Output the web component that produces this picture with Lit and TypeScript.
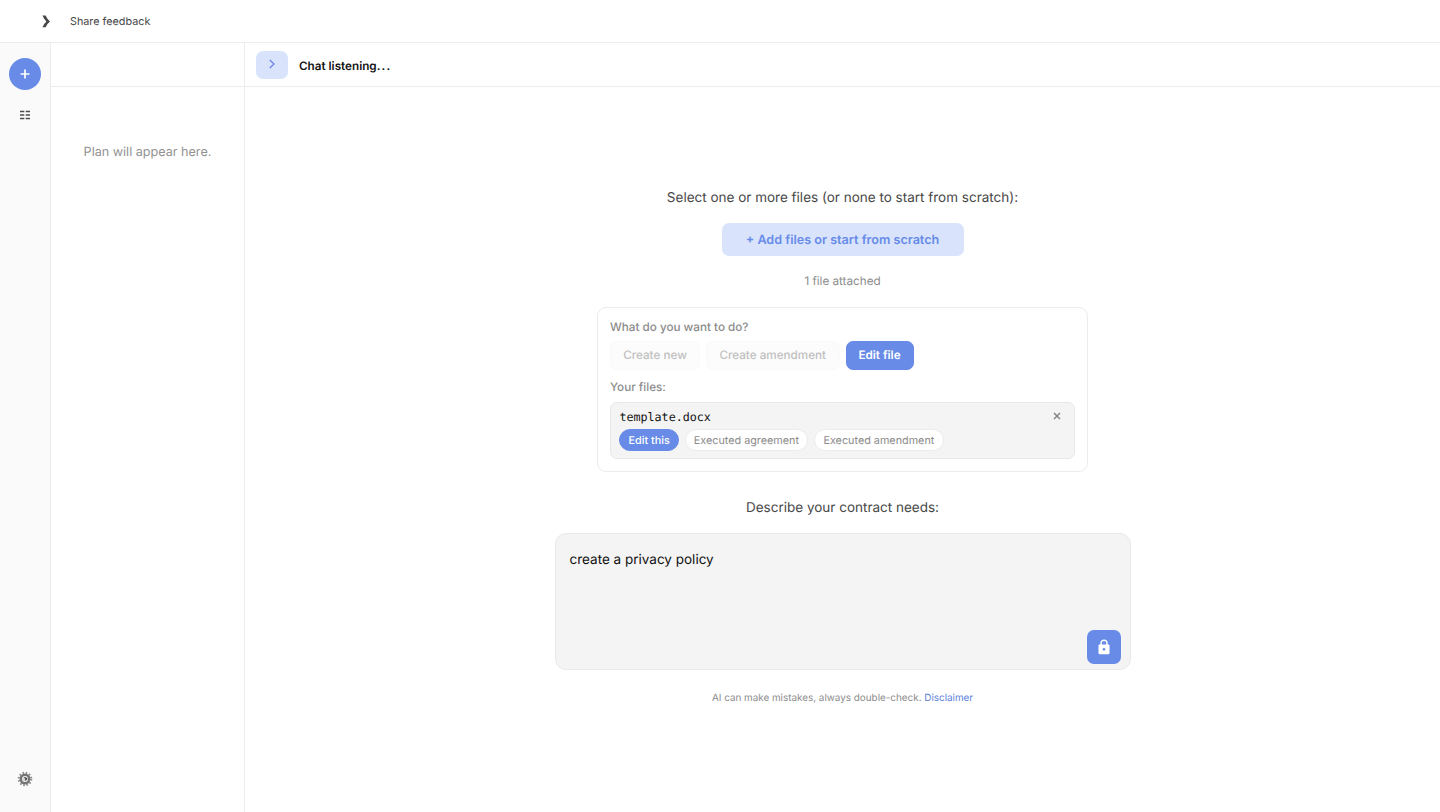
import { LitElement, html, css } from "lit";
import { customElement } from "lit/decorators.js";

@customElement("app-root")
export class AppRoot extends LitElement {
  static styles = css`
    :host {
      display: flex;
      flex-direction: column;
      height: 100vh;
      background: #fff;
      color: #111;
      font-family: Inter, "Liberation Sans", sans-serif;
      text-rendering: geometricPrecision;
      white-space: nowrap;
      overflow: hidden;
    }
    * { box-sizing: border-box; }
    svg { display: block; }
    .top {
      height: 43px;
      flex: none;
      display: flex;
      align-items: center;
      border-bottom: 1px solid #ececec;
      padding-left: 42px;
    }
    .top svg { margin-right: 20px; }
    .share { font-size: 10.8px; line-height: 16px; color: #484848; padding-top: 2px; }
    .body { flex: 1; display: flex; min-height: 0; }
    .rail {
      width: 51px;
      flex: none;
      background: #fafafa;
      border-right: 1px solid #ececec;
      display: flex;
      flex-direction: column;
      align-items: center;
      padding: 15px 0 25px;
    }
    .add {
      width: 32px;
      height: 32px;
      border-radius: 50%;
      background: #678be7;
      display: grid;
      place-items: center;
    }
    .list { margin-top: 20px; }
    .gear { margin-top: auto; }
    .plan { width: 194px; flex: none; border-right: 1px solid #ececec; }
    .planhead { height: 44px; border-bottom: 1px solid #ececec; }
    .planempty {
      margin-top: 56px;
      text-align: center;
      font-size: 12.6px;
      line-height: 20px;
      color: #929292;
    }
    .chat { flex: 1; display: flex; flex-direction: column; }
    .chathead {
      height: 44px;
      flex: none;
      border-bottom: 1px solid #ececec;
      display: flex;
      align-items: flex-start;
      padding: 8px 0 0 10.6px;
    }
    .toggle {
      width: 32.4px;
      height: 28px;
      border-radius: 7px;
      background: #d9e4fc;
      display: grid;
      place-items: center;
      padding-bottom: 2px;
    }
    .listening {
      margin: 5px 0 0 11px;
      font-size: 11.7px;
      font-weight: 560;
      line-height: 20px;
      color: #111;
    }
    .dots { letter-spacing: 1.2px; }
    .main {
      flex: 1;
      display: flex;
      flex-direction: column;
      align-items: center;
      padding-top: 100px;
    }
    .label { font-size: 13.5px; height: 20px; line-height: 22px; color: #484848; }
    .addfiles {
      margin-top: 16px;
      width: 242px;
      height: 33px;
      border-radius: 7px;
      background: #d9e4fc;
      color: #678be7;
      font-size: 12.6px;
      font-weight: 560;
      line-height: 35px;
      text-align: center;
    }
    .attached { margin-top: 15px; font-size: 11.7px; line-height: 20px; color: #8c8c8c; }
    .card {
      margin-top: 16px;
      width: 491px;
      height: 165px;
      border: 1px solid #ececec;
      border-radius: 9px;
      padding: 9px 12px 12px;
    }
    .q { font-size: 11.7px; font-weight: 550; line-height: 20px; color: #8c8c8c; }
    .modes { display: flex; margin-top: 4px; gap: 6px; }
    .mode {
      height: 28.5px;
      line-height: 26px;
      border: 1px solid #fafafa;
      border-radius: 7px;
      background: #fcfcfc;
      color: #c0c0c0;
      font-size: 11.7px;
      font-weight: 480;
      text-align: center;
    }
    .new { width: 90px; }
    .amend { width: 133.5px; }
    .edit { width: 68px; background: #678be7; border-color: #678be7; color: #fff; font-weight: 600; }
    .yours { margin-top: 7.5px; }
    .file {
      margin-top: 5px;
      height: 57px;
      border: 1px solid #e8e8e8;
      border-radius: 7px;
      background: #f4f4f4;
      padding: 4px 13px 0 8.4px;
    }
    .row { display: flex; justify-content: space-between; align-items: center; height: 19px; }
    .row svg { margin-bottom: 1px; }
    .name { font-family: "DejaVu Sans Mono", monospace; font-size: 11.7px; color: #111; }
    .pills { display: flex; margin-top: 3px; gap: 6px; }
    .pill {
      height: 21.5px;
      line-height: 21px;
      border: 1px solid #ececec;
      border-radius: 11px;
      background: #fff;
      color: #8c8c8c;
      font-size: 10.8px;
      text-align: center;
    }
    .p1 { width: 59.5px; background: #678be7; border-color: #678be7; color: #fff; font-weight: 500; }
    .p2 { width: 123px; }
    .p3 { width: 130px; }
    .describe { margin-top: 25px; }
    .composer {
      position: relative;
      margin-top: 16px;
      width: 576px;
      height: 137px;
      border: 1px solid #e9e9e9;
      border-radius: 11px;
      background: #f4f4f4;
      padding: 15px 14px;
      font-size: 13.5px;
      line-height: 22px;
      color: #111;
    }
    .lock {
      position: absolute;
      right: 8.5px;
      bottom: 5px;
      width: 34px;
      height: 34px;
      border-radius: 7px;
      background: #678be7;
      display: grid;
      place-items: center;
    }
    .note { margin-top: 19px; font-size: 9.9px; line-height: 18px; color: #8c8c8c; }
    .link { color: #5b7fdb; }
  `;

  render() {
    return html`
      <div class="top">
        <svg width="8" height="13" viewBox="0 0 8 13"><path d="M0.4 0.6H3.6Q5.2 4.3 8 6.5Q5.2 8.7 3.6 12.2H0.4Q2 8.7 4.4 6.5Q2 4.2 0.4 0.6Z" fill="#484848"/></svg>
        <span class="share">Share feedback</span>
      </div>
      <div class="body">
        <div class="rail">
          <div class="add">
            <svg width="10" height="10" viewBox="0 0 10 10"><path d="M5 0.6V9.4M0.6 5H9.4" stroke="#fff" stroke-width="1.7"/></svg>
          </div>
          <svg class="list" width="10" height="10" viewBox="0 0 10 10"><path d="M0 1.5H4.3M5.7 1.5H10M0 5H4.3M5.7 5H10M0 8.5H4.3M5.7 8.5H10" stroke="#4c4c4c" stroke-width="1.3"/></svg>
          <svg class="gear" width="16" height="16" viewBox="0 0 16 16">
            <circle cx="8" cy="8" r="6.3" fill="none" stroke="#8a8a8a" stroke-width="2" stroke-dasharray="1.5 1.8"/>
            <circle cx="8" cy="8" r="4.2" fill="none" stroke="#757575" stroke-width="2.6"/>
            <circle cx="8" cy="8" r="2.6" fill="#d8d8d8"/>
            <path d="M7.4 6.4L9.6 7.8L8.2 9.4" fill="none" stroke="#444" stroke-width="1.3"/>
          </svg>
        </div>
        <div class="plan">
          <div class="planhead"></div>
          <div class="planempty">Plan will appear here.</div>
        </div>
        <div class="chat">
          <div class="chathead">
            <div class="toggle">
              <svg width="6" height="10" viewBox="0 0 6 10"><path d="M0.8 1L5 5L0.8 9" fill="none" stroke="#6a7fe8" stroke-width="1.2"/></svg>
            </div>
            <div class="listening">Chat listening<span class="dots">...</span></div>
          </div>
          <div class="main">
            <div class="label">Select one or more files (or none to start from scratch):</div>
            <div class="addfiles">+ Add files or start from scratch</div>
            <div class="attached">1 file attached</div>
            <div class="card">
              <div class="q">What do you want to do?</div>
              <div class="modes">
                <div class="mode new">Create new</div>
                <div class="mode amend">Create amendment</div>
                <div class="mode edit">Edit file</div>
              </div>
              <div class="q yours">Your files:</div>
              <div class="file">
                <div class="row">
                  <span class="name">template.docx</span>
                  <svg width="8" height="8" viewBox="0 0 8 8"><path d="M1 1L7 7M7 1L1 7" stroke="#858585" stroke-width="1.5"/></svg>
                </div>
                <div class="pills">
                  <div class="pill p1">Edit this</div>
                  <div class="pill p2">Executed agreement</div>
                  <div class="pill p3">Executed amendment</div>
                </div>
              </div>
            </div>
            <div class="label describe">Describe your contract needs:</div>
            <div class="composer">
              create a privacy policy
              <div class="lock">
                <svg width="12" height="16" viewBox="0 0 12 16"><path d="M3 6V4.2A3 3 0 0 1 9 4.2V6" fill="none" stroke="#fff" stroke-width="1.4"/><rect x="0.5" y="5.4" width="11" height="9.8" rx="1.2" fill="#fff"/><circle cx="6" cy="10.2" r="1.3" fill="#678be7"/></svg>
              </div>
            </div>
            <div class="note">AI can make mistakes, always double-check. <span class="link">Disclaimer</span></div>
          </div>
        </div>
      </div>
    `;
  }
}
